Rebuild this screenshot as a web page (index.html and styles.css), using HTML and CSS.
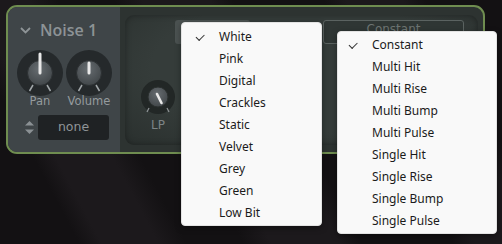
FILE: index.html
```html
<!DOCTYPE html>
<html lang="en">
<head>
  <meta charset="UTF-8" />
  <meta name="viewport" content="width=device-width, initial-scale=1" />
  <title>Noise 1</title>
  <link rel="stylesheet" href="styles.css">
</head>
<body>

  <div class="stage">

    <div class="panel">
      <div class="voice">
        <div class="voice-head">
          <svg class="chevron" width="11" height="7" viewBox="0 0 11 7">
            <polyline points="1,1 5.5,5.5 10,1" fill="none" stroke="#8e9497" stroke-width="1.8"/>
          </svg>
          <span>Noise 1</span>
        </div>

        <div class="knobs">
          <div class="knob">
            <svg width="46" height="46" viewBox="0 0 46 46">
              <circle cx="23" cy="23" r="23" fill="#25292b"/>
              <line x1="16" y1="35" x2="12.5" y2="41" stroke="#a3a8ab" stroke-width="1.5"/>
              <line x1="30" y1="35" x2="33.5" y2="41" stroke="#a3a8ab" stroke-width="1.5"/>
              <circle cx="23" cy="23" r="12.5" fill="url(#knobFill)" stroke="#2c3032" stroke-width="1"/>
              <line x1="23" y1="23" x2="23" y2="4" stroke="#e8e8e8" stroke-width="3" stroke-linecap="round"/>
              <defs>
                <radialGradient id="knobFill" cx="0.45" cy="0.35" r="0.7">
                  <stop offset="0" stop-color="#666c70"/>
                  <stop offset="1" stop-color="#3f4447"/>
                </radialGradient>
              </defs>
            </svg>
            <span class="knob-label">Pan</span>
          </div>
          <div class="knob">
            <svg width="46" height="46" viewBox="0 0 46 46">
              <circle cx="23" cy="23" r="23" fill="#25292b"/>
              <line x1="16" y1="35" x2="12.5" y2="41" stroke="#a3a8ab" stroke-width="1.5"/>
              <line x1="30" y1="35" x2="33.5" y2="41" stroke="#a3a8ab" stroke-width="1.5"/>
              <circle cx="23" cy="23" r="12.5" fill="url(#knobFill)" stroke="#2c3032" stroke-width="1"/>
              <line x1="23" y1="23" x2="23" y2="13" stroke="#e8e8e8" stroke-width="3" stroke-linecap="round"/>
            </svg>
            <span class="knob-label">Volume</span>
          </div>
        </div>

        <div class="type-row">
          <svg class="updown" width="9" height="13" viewBox="0 0 9 13">
            <polygon points="4.5,0 9,4.5 0,4.5" fill="#8b9194"/>
            <polygon points="0,8.5 9,8.5 4.5,13" fill="#8b9194"/>
          </svg>
          <div class="type-box">none</div>
        </div>
      </div>

      <div class="body">
        <div class="inner">
          <div class="filter">
            <svg width="34" height="34" viewBox="0 0 34 34">
              <circle cx="17" cy="17" r="17" fill="#222726"/>
              <line x1="8" y1="28" x2="6" y2="32" stroke="#8f9597" stroke-width="1.3"/>
              <line x1="26" y1="28" x2="28" y2="32" stroke="#8f9597" stroke-width="1.3"/>
              <circle cx="17" cy="17" r="10" fill="url(#knobFill)" stroke="#2a2f2e" stroke-width="1"/>
              <line x1="16" y1="14" x2="20.5" y2="23" stroke="#e8e8e8" stroke-width="2.6" stroke-linecap="round"/>
            </svg>
            <span class="knob-label dim">LP</span>
          </div>
          <div class="controls">
            <div class="btn btn-type"></div>
            <div class="btn btn-shape">Constant</div>
          </div>
        </div>
      </div>
    </div>

    <ul class="menu menu-type">
      <li class="checked">White</li>
      <li>Pink</li>
      <li>Digital</li>
      <li>Crackles</li>
      <li>Static</li>
      <li>Velvet</li>
      <li>Grey</li>
      <li>Green</li>
      <li>Low Bit</li>
    </ul>

    <ul class="menu menu-shape">
      <li class="checked">Constant</li>
      <li>Multi Hit</li>
      <li>Multi Rise</li>
      <li>Multi Bump</li>
      <li>Multi Pulse</li>
      <li>Single Hit</li>
      <li>Single Rise</li>
      <li>Single Bump</li>
      <li>Single Pulse</li>
    </ul>

  </div>

</body>
</html>
```

FILE: styles.css
```css
:root {
  --bg: #131113;
  --bg-band: #1c191c;
  --green: #6f8d50;
  --voice: #3f4548;
  --body: #2d3331;
  --inner: #323937;
  --label: #959b9e;
  --menu-bg: #f9f9f9;
  --menu-text: #1b1b1b;
}

* {
  box-sizing: border-box;
}

body {
  margin: 0;
  background: var(--bg);
  font-family: "DejaVu Sans", Verdana, sans-serif;
}

.stage {
  position: relative;
  width: 502px;
  height: 244px;
  overflow: hidden;
  padding: 5px 0 0 6px;
  background:
    linear-gradient(62deg,
      transparent 0 70px,
      var(--bg-band) 90px 140px,
      transparent 165px 215px,
      var(--bg-band) 240px 300px,
      transparent 320px 400px,
      var(--bg-band) 420px 470px,
      transparent 490px),
    var(--bg);
}

/* the voice panel */
.panel {
  display: flex;
  width: 479px;
  height: 149px;
  border: 2px solid var(--green);
  border-radius: 11px;
  overflow: hidden;
  background: var(--body);
}

.voice {
  width: 112px;
  flex: none;
  background: var(--voice);
  padding: 13px 0 0 0;
}

.voice-head {
  display: flex;
  align-items: center;
  height: 20px;
  color: #8d9396;
  font-family: "Open Sans", "DejaVu Sans", sans-serif;
  font-size: 16px;
  font-weight: 600;
}

.chevron {
  margin: 1px 9px 0 12px;
}

.knobs {
  display: flex;
  gap: 3px;
  margin: 10px 0 0 9px;
}

.knob {
  display: flex;
  flex-direction: column;
  align-items: center;
  width: 46px;
}

.knob-label {
  margin-top: -2px;
  font-size: 11.5px;
  line-height: 14px;
  color: var(--label);
}

.knob-label.dim {
  color: #7d8486;
}

.type-row {
  display: flex;
  align-items: center;
  margin: 7px 0 0 17px;
}

.updown {
  margin-right: 4px;
}

.type-box {
  width: 71px;
  height: 25px;
  border-radius: 3px;
  background: #1f2224;
  color: #8f9598;
  font-size: 12.5px;
  text-align: center;
  line-height: 24px;
}

.body {
  flex: 1;
  padding: 8px 5px 7px 5px;
}

.inner {
  display: flex;
  height: 100%;
  border-radius: 9px;
  background: radial-gradient(ellipse at 50% 40%, #353c3a 60%, #2a302e 100%);
  box-shadow: inset 0 0 6px rgba(0, 0, 0, 0.35);
}

.filter {
  display: flex;
  flex-direction: column;
  align-items: center;
  width: 34px;
  margin: 65px 0 0 16px;
}

.filter .knob-label {
  margin-top: 4px;
  font-size: 12px;
}

.controls {
  display: flex;
  align-items: flex-start;
  padding-top: 5px;
}

.btn {
  height: 24px;
  border-radius: 3px;
}

.btn-type {
  width: 75px;
  background: #4b5251;
}

.btn-shape {
  width: 141px;
  margin-left: 73px;
  border: 1.5px solid #5b6361;
  color: #6d7472;
  font-size: 12px;
  text-align: center;
  line-height: 16px;
  overflow: hidden;
  background: #2f3634;
}

/* popup menus */
.menu {
  position: absolute;
  margin: 0;
  list-style: none;
  background: var(--menu-bg);
  border: 1px solid #e3e3e3;
  border-radius: 4px;
  box-shadow: 0 2px 6px rgba(0, 0, 0, 0.35);
  font-family: "Noto Sans", "Open Sans", sans-serif;
  font-size: 12px;
  color: var(--menu-text);
}

.menu li {
  position: relative;
  height: 22px;
  line-height: 22px;
}

.menu li.checked::before {
  content: "";
  position: absolute;
  top: 8px;
  left: -23px;
  width: 7px;
  height: 3.5px;
  border-left: 1.2px solid #333;
  border-bottom: 1.2px solid #333;
  transform: rotate(-45deg);
}

.menu-type {
  left: 181px;
  top: 22px;
  width: 141px;
  height: 204px;
  padding: 3px 0 0 37px;
}

.menu-shape {
  left: 337px;
  top: 31px;
  width: 160px;
  height: 203px;
  padding: 2px 0 0 34px;
}
```
